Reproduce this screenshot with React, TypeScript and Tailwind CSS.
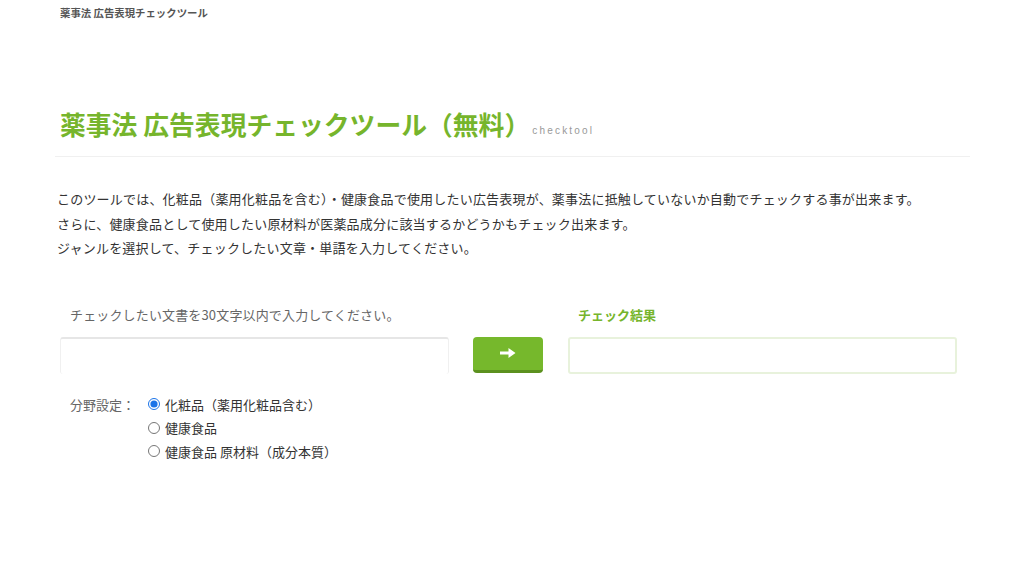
import React from "react";

const jp = { fontFamily: '"Noto Sans CJK JP", "Noto Sans", sans-serif' };

export default function App() {
  return (
    <div className="w-[1024px] min-h-[577px] bg-white text-[#333]" style={jp}>
      <div className="pl-[60px] pt-[6px] text-[10.4px] font-bold leading-[14px] text-[#555]">
        薬事法 広告表現チェックツール
      </div>
      <div className="ml-[55px] w-[915px]">
        <div className="flex items-end pl-[5px] pt-[86px] pb-[14px] border-b border-[#f0f0f0]">
          <h1 className="text-[25.8px] font-bold leading-[36px] text-[#76b52c]">
            薬事法 広告表現チェックツール（無料）
          </h1>
          <span
            className="ml-[2px] mb-[4px] text-[10px] leading-[14px] tracking-[2.2px] text-[#999]"
            style={{ fontFamily: '"Liberation Sans", Arial, sans-serif' }}
          >
            checktool
          </span>
        </div>
        <div className="mt-[30px] pl-[2px] text-[13px] leading-[24.5px] tracking-[0.2px] text-[#333]">
          <p>このツールでは、化粧品（薬用化粧品を含む）・健康食品で使用したい広告表現が、薬事法に抵触していないか自動でチェックする事が出来ます。</p>
          <p>さらに、健康食品として使用したい原材料が医薬品成分に該当するかどうかもチェック出来ます。</p>
          <p>ジャンルを選択して、チェックしたい文章・単語を入力してください。</p>
        </div>
        <div className="mt-[44px] flex items-end pl-[5px]">
          <div className="w-[389px]">
            <div className="pl-[10px] text-[13px] leading-[20px] tracking-[0.15px] text-[#666]">
              チェックしたい文書を30文字以内で入力してください。
            </div>
            <div className="mt-[12px] h-[37px] rounded-[3px] border-t-2 border-x border-t-[#e6e6e6] border-x-[#f0f0f0] bg-white" />
          </div>
          <div className="ml-[24px] mb-[1px] flex h-[36px] w-[70px] items-center justify-center rounded-[4px] border-b-[3px] border-[#5c911f] bg-[#76b82c]">
            <svg width="16" height="12" viewBox="0 0 16 12">
              <path d="M0 4.5h8.5V1l7 5-7 5V7.5H0z" fill="#fff" />
            </svg>
          </div>
          <div className="ml-[25px] w-[389px]">
            <div className="pl-[10px] text-[13px] font-bold leading-[20px] text-[#76b52c]">
              チェック結果
            </div>
            <div className="mt-[12px] h-[37px] rounded-[3px] border-2 border-[#e8f2dc] bg-white" />
          </div>
        </div>
        <div className="mt-[19px] flex pl-[15px] text-[13px] leading-[23.5px]">
          <div className="w-[78px] text-[#666]">分野設定：</div>
          <div className="flex flex-col text-[#333]">
            <label className="flex items-center">
              <input type="radio" name="g" defaultChecked className="m-0 mr-[5px] h-[12px] w-[12px] accent-[#1a73e8]" />
              化粧品（薬用化粧品含む）
            </label>
            <label className="flex items-center">
              <input type="radio" name="g" className="m-0 mr-[5px] h-[12px] w-[12px]" />
              健康食品
            </label>
            <label className="flex items-center">
              <input type="radio" name="g" className="m-0 mr-[5px] h-[12px] w-[12px]" />
              健康食品 原材料（成分本質）
            </label>
          </div>
        </div>
      </div>
    </div>
  );
}
